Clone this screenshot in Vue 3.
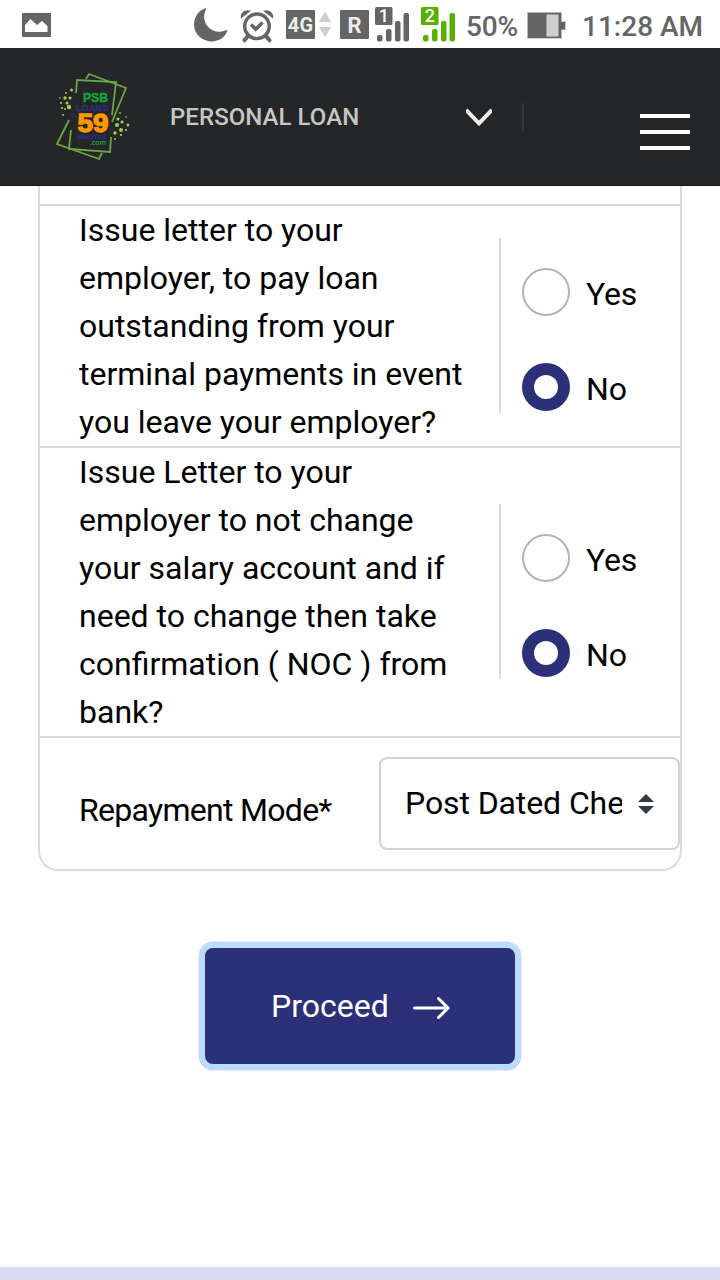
<script setup>
import { ref } from 'vue'

const questions = ref([
  {
    id: 'terminal',
    lines: ['Issue letter to your', 'employer, to pay loan', 'outstanding from your', 'terminal payments in event', 'you leave your employer?'],
    answer: 'No',
  },
  {
    id: 'noc',
    lines: ['Issue Letter to your', 'employer to not change', 'your salary account and if', 'need to change then take', 'confirmation ( NOC ) from', 'bank?'],
    answer: 'No',
  },
])
const options = ['Yes', 'No']
const signals = [
  { id: '1', color: '#656565' },
  { id: '2', color: '#56b000' },
]
</script>

<template>
  <div class="screen">
    <div class="status">
      <svg class="picture" width="29" height="24" viewBox="0 0 29 24">
        <rect width="29" height="24" rx="1" fill="#656565" />
        <path d="M3 19V12L8.500 6L15 12L20 8L25.500 13V19Z" fill="#fff" />
      </svg>
      <svg class="moon" width="34" height="34" viewBox="0 0 34 34">
        <path d="M11 .3C4.500 3 0 9 0 16.500C0 26 8 33.400 17.500 33.400C25 33.400 31.500 29 33.300 22.800C33 21.700 32.500 21.900 31 22.600C25 25.200 17.500 23.500 13.300 18C9.700 13.300 9.200 7 11.600 2.500C12.200 1 12 .2 11 .3Z" fill="#656565" />
      </svg>
      <svg class="alarm" width="34" height="34" viewBox="0 0 34 34" fill="none" stroke="#656565">
        <circle cx="17" cy="17.300" r="12.300" stroke-width="3.400" />
        <path d="M11 15.500L15.800 20.300L22.500 13.500" stroke-width="3.400" />
        <path d="M8 27L4.500 31.300M26 27L29.500 31.300" stroke-width="4" stroke-linecap="round" />
        <path d="M1 9.500C-.5 4 5 -.5 11 1.800Z M33 9.500C34.500 4 29 -.5 23 1.800Z" fill="#656565" stroke="none" />
      </svg>
      <span class="badge fourg">4G</span>
      <svg class="arrows" width="12" height="27" viewBox="0 0 12 27" fill="#cecece">
        <path d="M6 .5L12 11H0ZM0 16H12L6 26.500Z" />
      </svg>
      <span class="badge roaming">R</span>
      <svg v-for="s in signals" :key="s.id" class="signal" width="35" height="36" viewBox="0 0 35 36">
        <g :fill="s.color">
          <rect width="17.500" height="18" rx="1.500" />
          <rect x="2" y="28" width="5.500" height="6.500" rx="2" />
          <rect x="11" y="22" width="5.500" height="12.500" rx="2" />
          <rect x="20" y="14" width="5.500" height="20.500" rx="2" />
          <rect x="28.500" y="6" width="5.500" height="28.500" rx="2" />
        </g>
        <text x="8.800" y="15.300" text-anchor="middle" class="sim">{{ s.id }}</text>
      </svg>
      <span class="percent">50%</span>
      <svg class="battery" width="39" height="27" viewBox="0 0 39 27">
        <path d="M0 0H35V9H39V18H35V27H0Z" fill="#cfcfcf" />
        <path d="M.8.8H34.200V10H38V17.500H34.200V26H.8Z" fill="#656565" />
        <rect x="19.500" y="2.500" width="12" height="22" fill="#cfcfcf" />
      </svg>
      <span class="clock">11:28 AM</span>
    </div>

    <header class="header">
      <svg class="logo" width="95" height="100" viewBox="0 0 95 100">
        <g fill="none" stroke="#6aa842" stroke-width="1.800">
          <path d="M41 14L44 9L81 23L67 57" />
          <path d="M31 28L32 15L71 17L67 50M66 72L65 87L24 84L26 65" />
          <path d="M24 55L12 79L54 94L57 88" />
        </g>
        <g fill="#a5cf45">
          <circle cx="26.500" cy="25" r="1.500" /><circle cx="21" cy="28" r="1" />
          <circle cx="20" cy="33" r="1.700" /><circle cx="25" cy="33" r="1.600" />
          <circle cx="16" cy="38" r="1.100" /><circle cx="22" cy="38" r="1.500" />
          <circle cx="24" cy="42" r="2.200" /><circle cx="17" cy="43" r="1.100" />
          <circle cx="20" cy="44" r=".9" /><circle cx="18" cy="50" r="1" /><circle cx="15" cy="33" r=".8" />
          <circle cx="75" cy="48" r=".9" /><circle cx="73" cy="54" r="1.500" />
          <circle cx="81" cy="52" r=".8" /><circle cx="72" cy="60" r="2" />
          <circle cx="77" cy="57" r="1.600" /><circle cx="83" cy="60" r="1.400" />
          <circle cx="76" cy="65" r="2" /><circle cx="81" cy="65" r="1.100" />
          <circle cx="70" cy="68" r="1.700" /><circle cx="76" cy="70" r="1.100" /><circle cx="70" cy="74" r="1" />
        </g>
        <g class="brand">
          <text x="38" y="37" font-size="12" textLength="25" lengthAdjust="spacingAndGlyphs" fill="#13a538" stroke="#13a538" stroke-width=".4">PSB</text>
          <text x="31" y="45.500" font-size="8.500" textLength="32" lengthAdjust="spacingAndGlyphs" fill="#292f79" stroke="#292f79" stroke-width=".4">LOANS</text>
          <text x="26" y="52" font-size="5" fill="#292f79">IN</text>
          <text x="32.500" y="66.500" font-size="25" textLength="31" lengthAdjust="spacingAndGlyphs" fill="#ff9800" stroke="#ff9800" stroke-width="1.300">59</text>
          <text x="32" y="73.500" font-size="6" textLength="30" lengthAdjust="spacingAndGlyphs" fill="#292f79" stroke="#292f79" stroke-width=".3">MINUTES</text>
          <text x="45" y="80" class="dotcom" font-size="7.500" textLength="16" lengthAdjust="spacingAndGlyphs" fill="#19a84a">.com</text>
        </g>
      </svg>
      <span class="product">PERSONAL LOAN</span>
      <svg class="chevron" width="26" height="18" viewBox="0 0 26 18">
        <path d="M0 2L13 15.300L26 2" fill="none" stroke="#ededed" stroke-width="4" />
      </svg>
      <i class="rule"></i>
      <button class="menu" aria-label="Menu"><i></i><i></i><i></i></button>
    </header>

    <main>
      <section class="card">
        <div v-for="q in questions" :key="q.id" class="row">
          <div class="question"><div v-for="l in q.lines" :key="l">{{ l }}</div></div>
          <div class="choices">
            <div v-for="o in options" :key="o" class="choice" @click="q.answer = o">
              <i class="radio" :class="{ on: q.answer === o }"></i>
              <span>{{ o }}</span>
            </div>
          </div>
        </div>
        <div class="row last">
          <span class="label">Repayment Mode*</span>
          <div class="select">
            <span class="value">Post Dated Cheque</span>
            <svg width="16" height="20" viewBox="0 0 16 20" fill="#343a40"><path d="M0 8L8 0L16 8ZM0 12H16L8 20Z" /></svg>
          </div>
        </div>
      </section>
      <button class="proceed">
        <span>Proceed</span>
        <svg width="37" height="24" viewBox="0 0 37 24" fill="none" stroke="#fff" stroke-width="3" stroke-linecap="round" stroke-linejoin="round">
          <path d="M1.500 12H35M25.500 2.500L35 12L25.500 21.500" />
        </svg>
      </button>
    </main>
    <footer class="strip"></footer>
  </div>
</template>

<style>
body { background: #fefefe; overflow: hidden; }
</style>

<style scoped>
* { box-sizing: border-box; }
.screen { width: 720px; height: 1280px; display: flex; flex-direction: column; font-family: Roboto, sans-serif; font-size: 32px; line-height: 48px; color: #000; background: #fefefe; overflow: hidden; }
svg { display: block; flex: none; }
button { border: 0; padding: 0; font: inherit; }

.status { height: 48px; flex: none; display: flex; align-items: flex-start; color: #656565; white-space: nowrap; }
.picture { margin: 13px 0 0 22px; }
.moon { margin: 8px 0 0 143px; }
.alarm { margin: 9px 0 0 12px; }
.badge { width: 29px; height: 29px; margin-top: 10px; flex: none; background: #656565; color: #ececec; border-radius: 1px; font: bold 20px/31px Roboto, sans-serif; text-align: center; }
.fourg { margin-left: 12px; letter-spacing: 0.2px; }
.arrows { margin: 11px 0 0 4px; }
.roaming { margin-left: 9px; font-size: 22px; }
.signal { margin: 7px 0 0 6px; overflow: visible; }
.signal + .signal { margin-left: 11px; }
.sim { font: 500 18px Roboto, sans-serif; fill: #fff; }
.percent { margin-left: 10px; width: 61px; flex: none; font-size: 28px; font-weight: 500; line-height: 53px; letter-spacing: -0.2px; }
.battery { margin: 12px 0 0 0; }
.clock { margin-left: 16px; font-size: 28px; font-weight: 500; line-height: 53px; }

.header { height: 138px; flex: none; display: flex; align-items: flex-start; background: #252628; border-bottom: 1px solid #1b1b1d; }
.logo { margin: 17px 0 0 45px; }
.brand { font-family: "Liberation Sans", sans-serif; font-weight: bold; }
.dotcom { font-family: "Open Sans", sans-serif; font-weight: 600; }
.product { width: 296px; margin: 45px 0 0 30px; font-size: 24px; font-weight: 500; letter-spacing: 0.05px; color: #c5c6c6; white-space: nowrap; }
.chevron { margin-top: 60px; }
.rule { width: 2px; height: 28px; margin: 55px 0 0 30px; background: #343537; }
.menu { width: 50px; height: 36px; margin: 66px 0 0 116px; display: flex; flex-direction: column; justify-content: space-between; background: none; }
.menu i { height: 4px; background: #fff; }

main { flex: 1; display: flex; flex-direction: column; align-items: center; }
.card { width: 644px; padding-top: 18px; border: 2px solid #dadbdc; border-top: 0; border-radius: 0 0 20px 20px; }
.row { display: flex; align-items: center; border-top: 2px solid #dadbdc; padding-left: 39px; white-space: nowrap; }
.question { width: 420px; }
.choices { height: 175px; padding: 30px 0 0 21px; border-left: 2px solid #dadbdc; display: flex; flex-direction: column; gap: 47px; position: relative; top: -0.5px; }
.choice { display: flex; align-items: center; height: 48px; }
.radio { width: 48px; height: 48px; flex: none; border: 2px solid #adb5bd; border-radius: 50%; margin-right: 16px; }
.radio.on { border: 12px solid #2c3078; }
.choice span { padding-top: 4px; letter-spacing: -0.2px; }
.last { height: 133px; }
.label { width: 300px; padding-top: 12px; letter-spacing: -0.7px; }
.select { width: 301px; height: 93px; flex: none; display: flex; align-items: center; gap: 16px; padding-left: 24px; border: 2px solid #ced4da; border-radius: 8px; }
.value { width: 217px; padding-bottom: 2px; overflow: hidden; letter-spacing: -0.1px; }
.select svg { margin-top: 1px; }
.proceed { width: 310px; height: 116px; margin-top: 77px; display: flex; align-items: center; padding-left: 66px; background: #2c3078; color: #fff; border-radius: 8px; box-shadow: 0 0 0 6.400px #bddcfd; }
.proceed svg { margin: 4px 0 0 24px; }
.strip { height: 13px; flex: none; background: #d9daf3; }
</style>
